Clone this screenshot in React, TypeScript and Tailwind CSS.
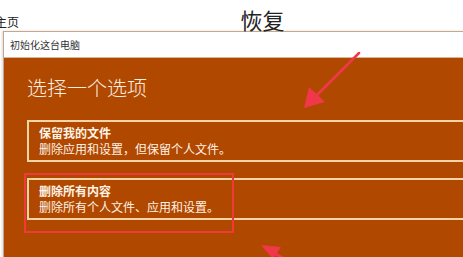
export default function App() {
  const font = { fontFamily: '"Noto Sans CJK SC", "Noto Sans", sans-serif' }
  return (
    <div className="relative w-[463px] h-[257px] overflow-hidden bg-white flex flex-col" style={font}>
      {/* page header behind the dialog */}
      <div className="h-[31px] shrink-0 relative flex">
        <div className="absolute left-[-5px] top-[15px] text-[12px] leading-[14px] text-[#222]">主页</div>
        <div className="w-full text-center pl-[62px] pt-[6px] text-[22px] leading-[26px] text-[#222]">恢复</div>
      </div>

      {/* dialog */}
      <div className="flex-1 ml-[3px] flex flex-col border-l border-t border-[#c9a88a] shadow-[-1px_0_2px_rgba(0,0,0,0.15)]">
        <div className="h-[26px] shrink-0 bg-white flex items-center pl-[6px] text-[10px] text-[#333] border-b border-[#d8b898]">
          初始化这台电脑
        </div>
        <div className="flex-1 bg-[#b04800] pl-[23px] pt-[17px] text-white">
          <div className="text-[20px] leading-[26px] font-light text-[#fbeee0]">选择一个选项</div>

          <div className="mt-[19px] mr-[-40px] h-[42px] border-2 border-[#f3d4a8] pl-[10px] pt-[3px] text-[#fff3e6]">
            <div className="text-[12px] leading-[16px] font-bold">保留我的文件</div>
            <div className="text-[12px] leading-[16px]">删除应用和设置，但保留个人文件。</div>
          </div>

          <div className="mt-[16px] mr-[-40px] h-[42px] border-2 border-[#f3d4a8] pl-[10px] pt-[3px] text-[#fff3e6]">
            <div className="text-[12px] leading-[16px] font-bold">删除所有内容</div>
            <div className="text-[12px] leading-[16px]">删除所有个人文件、应用和设置。</div>
          </div>
        </div>
      </div>

      {/* red highlight box */}
      <div className="absolute left-[24px] top-[173px] w-[210px] h-[60px] border-2 border-[#ee3a3a]" />

      {/* red arrows */}
      <svg className="absolute inset-0 pointer-events-none" width="463" height="257" viewBox="0 0 463 257">
        <line x1="359" y1="53" x2="315" y2="97" stroke="#f0384a" strokeWidth="2.5" strokeLinecap="round" />
        <polygon points="304,108 309,87 325,102" fill="#f0384a" />
        <line x1="290" y1="262" x2="272" y2="252" stroke="#f0384a" strokeWidth="3" />
        <polygon points="261,245 281,247 273,259" fill="#f0384a" />
      </svg>
    </div>
  )
}
